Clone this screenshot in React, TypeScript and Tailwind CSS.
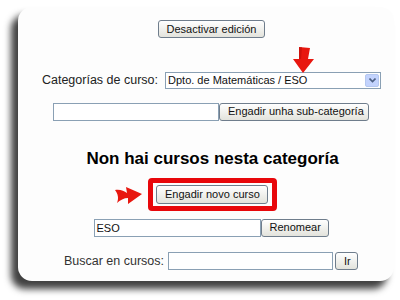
import React from "react";

const btn =
  "h-[18px] px-[8px] rounded-[3px] border border-[#6f7d8c] bg-gradient-to-b from-[#ffffff] to-[#e3e3dc] text-[11px] leading-none text-[#111] whitespace-nowrap";

const field = "h-[18px] border border-[#8aa0b4] bg-white text-[11px] px-[2px] text-[#111]";

const DownArrow = () => (
  <svg width="22" height="26" viewBox="0 0 22 26" className="block">
    <path d="M6 0 L17 1 L15 12 L21 12 L10 26 L0 12 L6 12 Z" fill="#e8170f" />
    <path d="M6 0 L9 0 L8 12 L3 12 L6 12 Z" fill="#b40c08" opacity="0.5" />
  </svg>
);

const RightArrow = () => (
  <svg width="27" height="18" viewBox="0 0 27 18" className="block">
    <path
      d="M0 4 C5 3 9 5 12 7 L11 1 L27 8 L13 18 L13 12 C9 12 5 14 2 17 C4 12 3 8 0 4 Z"
      fill="#e8170f"
    />
  </svg>
);

export default function App() {
  return (
    <div className="w-[400px] h-[300px] bg-white overflow-hidden" style={{ fontFamily: '"Liberation Sans", Arial, sans-serif' }}>
      <div className="ml-[18px] mt-[7px] w-[376px] h-[274px] rounded-[14px] bg-[#fdfdfd] shadow-[-7px_8px_7px_rgba(0,0,0,0.75)] flex flex-col items-center pl-[10px]">
        <button className={`${btn} mt-[13px] w-[107px]`}>Desactivar edición</button>

        <div className="mt-[33px] flex items-center ml-[1px] relative">
          <span className="text-[12.5px] text-[#222] mr-[7px]">Categorías de curso:</span>
          <div className="w-[216px] h-[17px] border border-[#8aa0b4] bg-white flex items-center justify-between pl-[2px] relative">
            <span className="text-[11px] text-[#111]">Dpto. de Matemáticas / ESO</span>
            <div className="w-[14px] h-[13px] mr-[1px] bg-[#c3d3fd] border border-[#b5c8f0] rounded-[2px] flex items-center justify-center">
              <svg width="7" height="5" viewBox="0 0 7 5">
                <path d="M0.5 0.5 L3.5 3.5 L6.5 0.5" stroke="#4d6185" strokeWidth="1.6" fill="none" />
              </svg>
            </div>
            <div className="absolute left-[127px] top-[-26px]">
              <DownArrow />
            </div>
          </div>
        </div>

        <div className="mt-[13px] flex items-center">
          <div className={`${field} w-[166px]`} />
          <button className={`${btn} w-[150px]`}>Engadir unha sub-categoría</button>
        </div>

        <h2 className="mt-[28px] text-[17px] font-bold text-black leading-[20px] ml-[3px]">Non hai cursos nesta categoría</h2>

        <div className="mt-[9px] flex items-center relative">
          <div className="absolute left-[-31px] top-[8px]">
            <RightArrow />
          </div>
          <div className="w-[129px] h-[33px] rounded-[4px] border-[5px] border-[#e8070b] flex items-center justify-center ml-[2px]">
            <button className={`${btn} w-[112px] h-[19px]`}>Engadir novo curso</button>
          </div>
        </div>

        <div className="mt-[8px] flex items-center">
          <div className={`${field} w-[167px] flex items-center`}>ESO</div>
          <button className={`${btn} w-[68px]`}>Renomear</button>
        </div>

        <div className="mt-[15px] flex items-center">
          <span className="text-[12.5px] text-[#333] mr-[4px]">Buscar en cursos:</span>
          <div className={`${field} w-[165px]`} />
          <button className={`${btn} w-[23px] ml-[2px] px-0`}>Ir</button>
        </div>
      </div>
    </div>
  );
}
